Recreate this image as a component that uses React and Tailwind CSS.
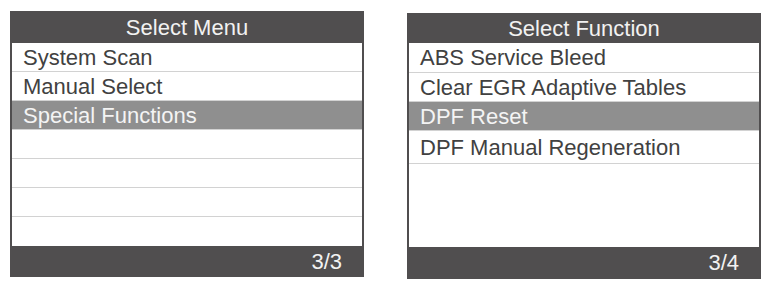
const font = { fontFamily: '"Liberation Sans", Arial, sans-serif' };

const Row = ({ label, active, h = 'h-[29px]' }) => (
  <div
    className={`${h} flex items-center pl-[11px] pt-[1px] border-b border-[#d2d2d2] text-[22px] leading-none ${
      active ? 'bg-[#8f8f8f] text-[#f4f4f4]' : 'text-[#414141]'
    }`}
  >
    {label}
  </div>
);

const Panel = ({ title, page, className, headerH, footerH, children }) => (
  <div className={`w-[354px] h-[266px] flex flex-col bg-[#504e4f] px-[2px] ${className}`}>
    <div className={`${headerH} flex items-center justify-center pt-[1px] text-[22px] leading-none text-[#f2f2f2]`}>
      {title}
    </div>
    <div className="flex-1 bg-white flex flex-col">{children}</div>
    <div className={`${footerH} flex items-center justify-end pr-[20px] text-[22px] leading-none text-[#f2f2f2]`}>
      {page}
    </div>
  </div>
);

export default function App() {
  return (
    <div className="w-[770px] h-[286px] bg-white flex items-start" style={font}>
      <Panel title="Select Menu" page="3/3" className="ml-[10px] mt-[11px]" headerH="h-[32px]" footerH="h-[31px]">
        <Row label="System Scan" />
        <Row label="Manual Select" />
        <Row label="Special Functions" active />
        <Row label="" />
        <Row label="" />
        <Row label="" />
      </Panel>
      <Panel title="Select Function" page="3/4" className="ml-[43px] mt-[13px]" headerH="h-[30px]" footerH="h-[32px]">
        <Row label="ABS Service Bleed" h="h-[30px]" />
        <Row label="Clear EGR Adaptive Tables" />
        <Row label="DPF Reset" active />
        <Row label="DPF Manual Regeneration" h="h-[33px]" />
      </Panel>
    </div>
  );
}
